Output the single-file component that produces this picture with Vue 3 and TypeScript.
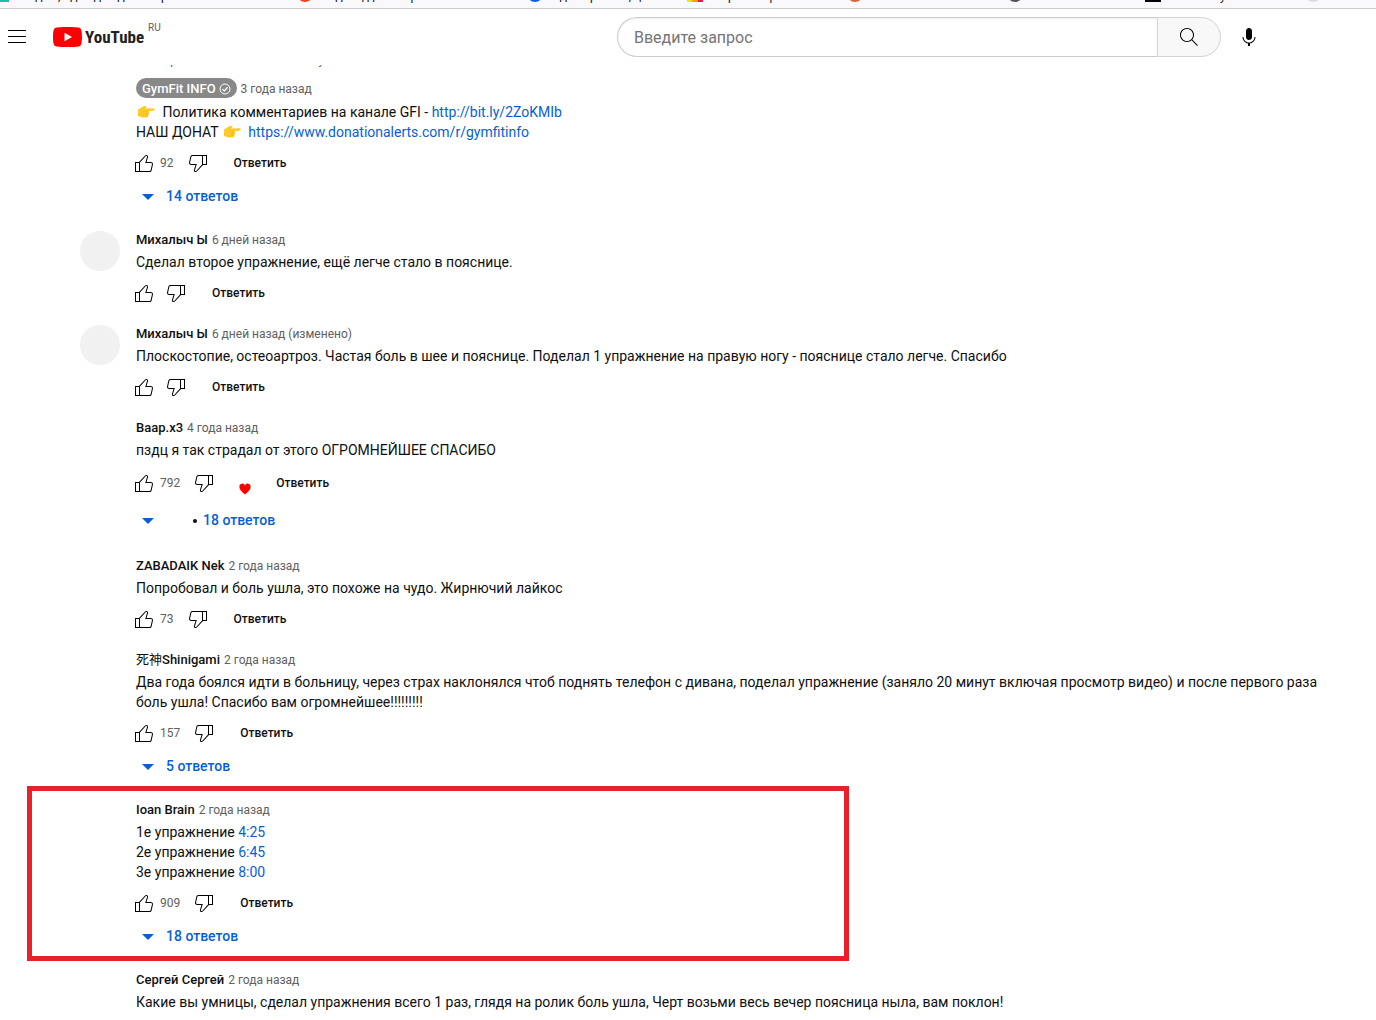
<script setup lang="ts">
interface Part {
  text?: string
  href?: string
  hand?: boolean
}
interface Comment {
  author: string
  hanzi?: string
  time: string
  lines: Part[][]
  owner?: boolean
  avatar?: boolean
  likes?: string
  hearted?: boolean
  replies?: string
  actions?: boolean
  marked?: boolean
}
interface Bookmark {
  title: string
  color: string
  shape: string
  width: number
}

const bookmarks: Bookmark[] = [
  { title: 'Людям, идеи для доски проектов', color: '#12c2a0', shape: 'square', width: 304 },
  { title: 'Яндекс, доска проектов', color: '#fc3f1d', shape: 'round', width: 230 },
  { title: 'Идеи проекта, ц', color: '#0b5fd7', shape: 'round', width: 160 },
  { title: 'Маркет справка', color: '#ff9d00', shape: 'flag', width: 160 },
  { title: 'Новости', color: '#d9623b', shape: 'round', width: 160 },
  { title: 'Список книг', color: '#555555', shape: 'round', width: 138 },
  { title: 'Web Study', color: '#000000', shape: 'square', width: 160 },
  { title: 'Почта', color: '#dddddd', shape: 'round', width: 70 },
]

const comments: Comment[] = [
  {
    author: 'GymFit INFO',
    time: '3 года назад',
    owner: true,
    actions: true,
    likes: '92',
    replies: '14 ответов',
    lines: [
      [{ hand: true }, { text: ' Политика комментариев на канале GFI - ' }, { text: 'http://bit.ly/2ZoKMIb', href: '#policy' }],
      [{ text: 'НАШ ДОНАТ ' }, { hand: true }, { text: ' ' }, { text: 'https://www.donationalerts.com/r/gymfitinfo', href: '#donate' }],
    ],
  },
  {
    author: 'Михалыч Ы',
    time: '6 дней назад',
    avatar: true,
    actions: true,
    lines: [[{ text: 'Сделал второе упражнение, ещё легче стало в пояснице.' }]],
  },
  {
    author: 'Михалыч Ы',
    time: '6 дней назад (изменено)',
    avatar: true,
    actions: true,
    lines: [[{ text: 'Плоскостопие, остеоартроз. Частая боль в шее и пояснице. Поделал 1 упражнение на правую ногу - пояснице стало легче. Спасибо' }]],
  },
  {
    author: 'Ваар.х3',
    time: '4 года назад',
    actions: true,
    likes: '792',
    hearted: true,
    replies: '18 ответов',
    lines: [[{ text: 'пздц я так страдал от этого ОГРОМНЕЙШЕЕ СПАСИБО' }]],
  },
  {
    author: 'ZABADAIK Nek',
    time: '2 года назад',
    actions: true,
    likes: '73',
    lines: [[{ text: 'Попробовал и боль ушла, это похоже на чудо. Жирнючий лайкос' }]],
  },
  {
    author: 'Shinigami',
    hanzi: '死神',
    time: '2 года назад',
    actions: true,
    likes: '157',
    replies: '5 ответов',
    lines: [[{ text: 'Два года боялся идти в больницу, через страх наклонялся чтоб поднять телефон с дивана, поделал упражнение (заняло 20 минут включая просмотр видео) и после первого раза боль ушла! Спасибо вам огромнейшее!!!!!!!!!' }]],
  },
  {
    author: 'Ioan Brain',
    time: '2 года назад',
    actions: true,
    likes: '909',
    replies: '18 ответов',
    marked: true,
    lines: [
      [{ text: '1е упражнение ' }, { text: '4:25', href: '#t=265' }],
      [{ text: '2е упражнение ' }, { text: '6:45', href: '#t=405' }],
      [{ text: '3е упражнение ' }, { text: '8:00', href: '#t=480' }],
    ],
  },
  {
    author: 'Сергей Сергей',
    time: '2 года назад',
    lines: [[{ text: 'Какие вы умницы, сделал упражнения всего 1 раз, глядя на ролик боль ушла, Черт возьми весь вечер поясница ныла, вам поклон!' }]],
  },
]
</script>

<template>
  <div class="page">
    <nav class="bookmarks" aria-label="Закладки">
      <span v-for="b in bookmarks" :key="b.title" class="bookmark" :style="{ width: b.width + 'px' }">
        <i :class="['favicon', b.shape]" :style="{ backgroundColor: b.color }"></i>{{ b.title }}
      </span>
    </nav>

    <header class="masthead">
      <div class="start">
        <button class="icon-button menu" aria-label="Меню">
          <svg viewBox="0 0 24 24"><path d="M21 6H3V5h18v1zM21 11H3v1h18v-1zM21 17H3v1h18v-1z" /></svg>
        </button>
        <a class="logo" href="#home" aria-label="YouTube">
          <svg class="logo-mark" viewBox="0 0 29 20">
            <path fill="#f00" d="M28.3 3.1A3.6 3.6 0 0 0 25.7.6C23.5 0 14.5 0 14.5 0S5.500 0 3.300.6A3.600 3.600 0 0 0 .7 3.100C0 5.400 0 10 0 10s0 4.600.7 6.900a3.600 3.600 0 0 0 2.600 2.500c2.200.6 11.200.6 11.200.6s9 0 11.200-.6a3.600 3.600 0 0 0 2.600-2.500C29 14.600 29 10 29 10s0-4.600-.7-6.900z" />
            <path fill="#fff" d="M11.500 14.300 19 10l-7.500-4.300z" />
          </svg>
          <span class="wordmark">YouTube</span>
          <span class="country">RU</span>
        </a>
      </div>
      <form class="search" @submit.prevent>
        <input type="text" placeholder="Введите запрос" aria-label="Введите запрос" />
        <button class="search-button" aria-label="Поиск">
          <svg viewBox="0 0 24 24"><path d="M20.870 20.170l-5.590-5.590C16.350 13.350 17 11.750 17 10c0-3.870-3.130-7-7-7s-7 3.130-7 7 3.130 7 7 7c1.750 0 3.350-.65 4.580-1.710l5.590 5.590.7-.71zM10 16c-3.310 0-6-2.690-6-6s2.690-6 6-6 6 2.690 6 6-2.690 6-6 6z" /></svg>
        </button>
      </form>
      <button class="icon-button mic" aria-label="Голосовой поиск">
        <svg viewBox="0 0 24 24"><path d="M12 3c-1.660 0-3 1.370-3 3.070v5.860C9 13.630 10.340 15 12 15s3-1.370 3-3.070V6.070C15 4.370 13.660 3 12 3zM18.500 12h-1c0 3.030-2.470 5.500-5.500 5.500S6.500 15.030 6.500 12h-1c0 3.240 2.390 5.930 5.500 6.410V21h2v-2.590c3.110-.48 5.500-3.170 5.500-6.410z" /></svg>
      </button>
    </header>

    <main class="comments">
      <p class="pinned"><span>Закреплено пользователем GymFit INFO</span></p>

      <article v-for="(c, i) in comments" :key="i" :class="['comment', { marked: c.marked }]">
        <div :class="['avatar', { filled: c.avatar }]"></div>
        <div class="content">
          <div :class="['meta', { owner: c.owner }]">
            <a class="author" href="#channel">
              <span v-if="c.hanzi" class="hanzi">{{ c.hanzi }}</span>{{ c.author }}
              <svg v-if="c.owner" viewBox="0 0 12 12" fill="none" stroke="#fff">
                <circle cx="6" cy="6" r="5" />
                <path d="M3.500 6.200l1.800 1.700 3.300-3.700" stroke-width="1.300" />
              </svg>
            </a>
            <a class="time" href="#comment">{{ c.time }}</a>
          </div>
          <div class="text">
            <div v-for="(line, n) in c.lines" :key="n">
              <template v-for="(p, k) in line" :key="k">
                <svg v-if="p.hand" class="hand" viewBox="0 0 18 14" role="img" aria-label="Указывает вправо">
                  <path fill="#ffc928" d="M1 4.500C3 3.500 4.500 1.800 6.500 1.200c1.500-.4 3.200-.3 3 .8-.1.700-1 .9-1.300 1.500l8.300-.2c1.500 0 1.600 2.400 0 2.400l-5 .4c1 .7.800 1.900 0 2.300.6.800.3 1.700-.5 2 .3 1-.3 1.800-1.500 2-2 .3-4.500.2-6-.7L1 11z" />
                  <path fill="none" stroke="#f2a900" stroke-width=".5" d="M11.500 6.100l-3.600.2M11.500 8.400l-3.400.1M11 10.400l-2.800.1" />
                </svg>
                <a v-else-if="p.href" :href="p.href">{{ p.text }}</a>
                <span v-else>{{ p.text }}</span>
              </template>
            </div>
          </div>
          <div v-if="c.actions" :class="['actions', { tall: c.hearted }]">
            <button class="vote" aria-label="Нравится">
              <svg viewBox="0 0 24 24"><path d="M18.770,11h-4.230l1.520-4.940C16.380,5.030,15.540,4,14.380,4c-0.580,0-1.140,0.240-1.520,0.650L7,11H3v10h4h1h9.430c1.060,0,1.980-0.670,2.190-1.610l1.340-6C21.230,12.150,20.180,11,18.770,11z M7,20H4v-8h3V20z M19.980,13.170l-1.340,6C18.540,19.650,18.030,20,17.430,20H8v-8.610l5.600-6.060C13.790,5.120,14.080,5,14.380,5c0.260,0,0.500,0.110,0.630,0.300c0.070,0.100,0.150,0.260,0.090,0.470l-1.520,4.940L13.180,12h1.350h4.230c0.410,0,0.800,0.170,1.030,0.460C19.920,12.610,20.050,12.860,19.980,13.170z" /></svg>
            </button>
            <span v-if="c.likes" class="count">{{ c.likes }}</span>
            <button class="vote" aria-label="Не нравится">
              <svg viewBox="0 0 24 24"><path d="M17,4h-1H6.570C5.500,4,4.590,4.670,4.380,5.610l-1.340,6C2.770,12.850,3.820,14,5.230,14h4.230l-1.520,4.940C7.620,19.970,8.460,21,9.620,21c0.580,0,1.140-0.240,1.520-0.650L17,14h4V4H17z M10.400,19.670C10.210,19.880,9.920,20,9.620,20c-0.260,0-0.500-0.110-0.630-0.300c-0.070-0.100-0.150-0.260-0.090-0.470l1.520-4.940l0.400-1.290H9.460H5.230c-0.410,0-0.800-0.170-1.030-0.460c-0.120-0.150-0.250-0.400-0.180-0.720l1.340-6C5.460,5.350,5.970,5,6.570,5H16v8.610L10.400,19.670z M20,13h-3V5h3V13z" /></svg>
            </button>
            <span v-if="c.hearted" class="heart">
              <svg viewBox="0 0 12 12"><path fill="#f00" d="M6 11.500C2 8 .5 6.500.5 4A2.800 2.800 0 0 1 6 2.800 2.800 2.800 0 0 1 11.500 4C11.500 6.500 10 8 6 11.500z" /></svg>
            </span>
            <button class="reply">Ответить</button>
          </div>
          <button v-if="c.replies" :class="['replies', { tall: c.hearted }]">
            <svg viewBox="0 0 12 6"><path d="M0 0h12L6 6z" /></svg>
            <span v-if="c.hearted" class="dot"></span>
            <span class="replies-label">{{ c.replies }}</span>
          </button>
        </div>
      </article>
    </main>
  </div>
</template>

<style>
body {
  margin: 0;
  background: #fff;
}
</style>

<style scoped>
.page {
  min-height: 100vh;
  font-family: Roboto, "Noto Sans CJK SC", sans-serif;
  font-size: 14px;
  line-height: 20px;
  color: #0f0f0f;
}
button {
  padding: 0;
  border: 0;
  background: none;
  font-family: inherit;
  color: inherit;
}
a {
  color: #065fd4;
  text-decoration: none;
}
svg {
  display: block;
  flex: none;
}

.bookmarks {
  display: flex;
  align-items: flex-end;
  box-sizing: border-box;
  height: 9px;
  margin-left: -7px;
  padding-bottom: 6px;
  overflow: hidden;
  border-bottom: 1px solid #ccc;
  background: #f9f9fb;
  font-size: 12px;
  white-space: nowrap;
}
.bookmark {
  display: flex;
  flex: none;
  align-items: flex-start;
  gap: 8px;
  height: 16px;
}
.favicon {
  flex: none;
  width: 16px;
  height: 16px;
}
.favicon.round {
  border-radius: 50%;
}
.favicon.flag {
  background-image: linear-gradient(90deg, #ffdd00 33%, #ff9d00 33% 66%, #ed1c40 66%);
}

.masthead {
  display: flex;
  align-items: center;
  height: 56px;
  padding: 0 115px 0 5px;
}
.start {
  display: flex;
  flex: 1;
  align-items: center;
  gap: 24px;
}
.icon-button svg,
.search-button svg,
.vote svg {
  width: 24px;
  height: 24px;
}
.logo {
  display: flex;
  align-items: center;
  color: #212121;
}
.logo-mark {
  width: 29px;
  height: 20px;
}
.wordmark {
  margin-left: 3px;
  font-family: "Roboto Condensed", "Liberation Sans Narrow", Roboto, sans-serif;
  font-size: 17px;
  font-weight: 700;
}
.country {
  align-self: flex-start;
  margin: -4px 0 0 4px;
  font-size: 10px;
  line-height: 10px;
  color: #606060;
}
.search {
  display: flex;
  width: 604px;
  height: 40px;
}
.search input {
  box-sizing: border-box;
  flex: 1;
  min-width: 0;
  padding: 0 16px;
  border: 1px solid #ccc;
  border-right: 0;
  border-radius: 20px 0 0 20px;
  box-shadow: inset 0 1px 2px #eee;
  font-family: inherit;
  font-size: 16px;
}
.search input::placeholder {
  color: #757575;
  opacity: 1;
}
.search-button {
  display: flex;
  align-items: center;
  justify-content: center;
  box-sizing: border-box;
  width: 64px;
  border: 1px solid #d3d3d3;
  border-radius: 0 20px 20px 0;
  background: #f8f8f8;
}
.mic {
  margin-left: 16px;
}

.comments {
  padding: 0 40px 0 80px;
}
.pinned {
  display: flex;
  align-items: flex-end;
  height: 4px;
  margin: 0 0 9px 70px;
  overflow: hidden;
  font-size: 12px;
  line-height: 18px;
  color: #606060;
}
.comment {
  position: relative;
  display: flex;
  gap: 16px;
  margin-bottom: 16px;
}
.marked::after {
  content: "";
  position: absolute;
  top: -15px;
  bottom: -6px;
  left: -53px;
  box-sizing: border-box;
  width: 822px;
  border: 5px solid #e8202a;
  pointer-events: none;
}
.avatar {
  flex: none;
  width: 40px;
  height: 40px;
  border-radius: 50%;
}
.avatar.filled {
  background: #f1f1f1;
}
.content {
  flex: 1;
  min-width: 0;
}
.meta {
  display: flex;
  align-items: center;
  gap: 4px;
  height: 18px;
  margin-bottom: 3px;
}
.author {
  font-size: 13px;
  font-weight: 500;
  line-height: 18px;
  color: #0f0f0f;
}
.hanzi {
  font-weight: 400;
}
.time {
  font-size: 12px;
  line-height: 18px;
  color: #606060;
}
.meta.owner {
  align-items: flex-end;
  height: 20px;
  margin-bottom: 4px;
}
.owner .author {
  display: flex;
  align-items: center;
  gap: 3px;
  padding: 2px 6px 0;
  border-radius: 10px;
  background: #888;
  color: #fff;
}
.owner .author svg {
  width: 12px;
  height: 12px;
}
.text {
  white-space: pre-wrap;
}
.hand {
  display: inline-block;
  width: 18px;
  height: 14px;
  margin: 0 4px 0 1px;
  vertical-align: -2px;
}
.actions {
  display: flex;
  align-items: center;
  height: 32px;
  margin: 5px 0 0 -8px;
}
.actions.tall {
  height: 36px;
}
.vote {
  padding: 4px;
}
.count {
  margin-right: 8px;
  font-size: 12px;
  line-height: 18px;
  color: #606060;
}
.reply {
  margin-left: 8px;
  padding: 0 12px;
  font-size: 12px;
  font-weight: 500;
  line-height: 32px;
}
.heart {
  display: flex;
  align-items: flex-end;
  justify-content: center;
  box-sizing: border-box;
  width: 36px;
  height: 36px;
  padding: 0 0 6px 14px;
}
.heart svg {
  width: 12px;
  height: 12px;
}
.replies {
  display: flex;
  align-items: center;
  gap: 12px;
  height: 36px;
  padding: 0 16px 0 6px;
  font-size: 14px;
  font-weight: 500;
  line-height: 20px;
  color: #065fd4;
}
.replies.tall {
  gap: 6px;
  height: 40px;
}
.replies svg {
  width: 12px;
  height: 6px;
  fill: #065fd4;
}
.replies-label {
  padding-bottom: 2px;
}
.dot {
  width: 4px;
  height: 4px;
  margin-left: 33px;
  border-radius: 50%;
  background: #0f0f0f;
}
</style>
